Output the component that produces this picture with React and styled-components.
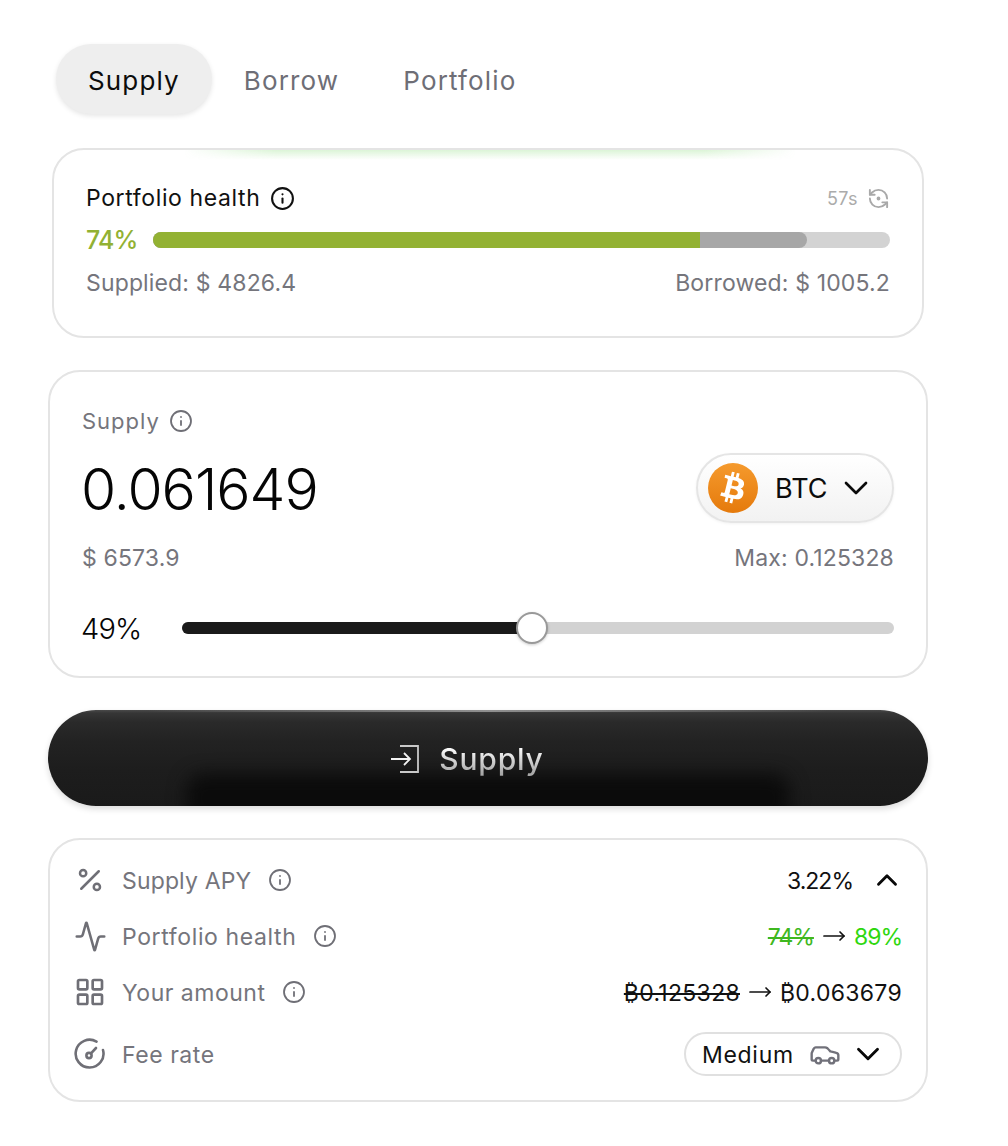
import React from "react";
import styled, { createGlobalStyle } from "styled-components";
import { Info, ChevronDown, ChevronUp, Percent, Activity, LayoutGrid, RefreshCcwDot, Car, MoveRight } from "lucide-react";

const Global = createGlobalStyle`
  html, body { margin: 0; padding: 0; background: #fff; }
  body { font-family: Inter, "Noto Sans", sans-serif; -webkit-font-smoothing: antialiased; }
  svg { flex-shrink: 0; }
`;

const Page = styled.div`
  width: 880px;
  margin-left: 48px;
  padding-top: 44px;
  height: 1102px;
  display: flex;
  flex-direction: column;
`;

const Tabs = styled.nav`
  display: flex;
  margin-left: 8px;
  height: 70px;
  align-items: center;
`;

const Tab = styled.div`
  box-sizing: border-box;
  height: 70px;
  display: flex;
  align-items: center;
  padding: 2px 32px 0;
  border-radius: 35px;
  font-size: 26px;
  letter-spacing: 1.15px;
  color: ${p => (p.$active ? "#0c0c0c" : "#6e6e76")};
  background: ${p => (p.$active ? "#eeeeee" : "transparent")};
  box-shadow: ${p => (p.$active ? "0 2px 5px rgba(0,0,0,.1)" : "none")};
`;

const Card = styled.section`
  position: relative;
  box-sizing: border-box;
  border: 2px solid #e4e4e4;
  border-radius: 32px;
  background: #fff;
  overflow: hidden;
`;

const HealthCard = styled(Card)`
  margin: 34px 4px 0;
  height: 190px;
  padding: 30px 32px 0 32px;
`;

const Glow = styled.div`
  position: absolute;
  top: -2px;
  left: 130px;
  width: 612px;
  height: 12px;
  background: linear-gradient(180deg, rgba(116, 214, 96, .3), rgba(116, 214, 96, 0));
  -webkit-mask-image: linear-gradient(90deg, transparent, #000 15%, #000 85%, transparent);
  mask-image: linear-gradient(90deg, transparent, #000 15%, #000 85%, transparent);
  &::before {
    content: "";
    position: absolute;
    top: 0;
    left: 0;
    right: 0;
    height: 2px;
    background: linear-gradient(90deg, rgba(116,214,96,0), #d6efcf 20%, #78d868 50%, #d6efcf 80%, rgba(116,214,96,0));
  }
`;

const Row = styled.div`
  display: flex;
  align-items: center;
  justify-content: space-between;
`;

const TitleGroup = styled.div`
  display: flex;
  align-items: center;
  gap: ${p => p.$gap || 10}px;
`;

const HealthTitle = styled.span`
  font-size: 23px;
  letter-spacing: 0.62px;
  color: #111;
  line-height: 36px;
`;

const Countdown = styled.div`
  display: flex;
  align-items: center;
  gap: 9px;
  color: #ababab;
  font-size: 18px;
  letter-spacing: .4px;
`;

const BarRow = styled.div`
  display: flex;
  align-items: center;
  gap: 16px;
  height: 34px;
  margin-top: 7px;
`;

const HealthPct = styled.span`
  width: 51px;
  font-size: 25px;
  font-weight: 500;
  color: #92b133;
  letter-spacing: -.9px;
`;

const Track = styled.div`
  position: relative;
  flex: 1;
  height: 16px;
  border-radius: 8px;
  background: #d3d3d3;
  overflow: hidden;
`;

const BorrowFill = styled.div`
  position: absolute;
  inset: 0 auto 0 0;
  border-radius: 0 8px 8px 0;
  background: #a7a7a7;
`;

const SupplyFill = styled.div`
  position: absolute;
  inset: 0 auto 0 0;
  background: #93b233;
`;

const MutedRow = styled(Row)`
  margin-top: ${p => p.$mt || 0}px;
  font-size: 23px;
  line-height: 34px;
  letter-spacing: .15px;
  color: #75757c;
`;

const SupplyCard = styled(Card)`
  margin-top: 32px;
  height: 308px;
  padding: 32px 32px 0 32px;
`;

const SupplyLabel = styled.span`
  font-size: 22px;
  letter-spacing: 1px;
  color: #75757c;
  line-height: 34px;
`;

const AmountRow = styled(Row)`
  margin-top: 15px;
  height: 70px;
`;

const Amount = styled.div`
  font-size: 57px;
  font-weight: 300;
  letter-spacing: -1px;
  color: #050505;
  padding-top: 3px;
  margin-left: -1px;
`;

const TokenChip = styled.div`
  box-sizing: border-box;
  width: 198px;
  height: 70px;
  display: flex;
  align-items: center;
  gap: 17px;
  padding: 0 16px 0 10px;
  border: 2px solid #e5e5e5;
  border-radius: 35px;
  background: linear-gradient(180deg, #fff, #f2f2f2);
  font-size: 27px;
  color: #0c0c0c;
  box-shadow: 0 1px 3px rgba(0,0,0,.05);
`;

const TokenChevron = styled.span`
  display: flex;
  margin-left: -8px;
  color: #0a0a0a;
`;

const SliderRow = styled.div`
  display: flex;
  align-items: center;
  height: 36px;
  margin-top: 35px;
`;

const SliderPct = styled.span`
  width: 100px;
  font-size: 29px;
  font-weight: 300;
  color: #050505;
  letter-spacing: -.8px;
  margin-left: -1px;
  padding-right: 1px;
`;

const SliderTrack = styled.div`
  position: relative;
  flex: 1;
  height: 12px;
  border-radius: 6px;
  background: #d2d2d2;
`;

const SliderFill = styled.div`
  height: 100%;
  border-radius: 6px 0 0 6px;
  background: #1a1a1a;
`;

const Thumb = styled.div`
  position: absolute;
  top: 50%;
  width: 32px;
  height: 32px;
  box-sizing: border-box;
  border: 2px solid #999;
  border-radius: 50%;
  background: #fff;
  transform: translate(-50%, -50%);
  box-shadow: 0 1px 3px rgba(0,0,0,.2);
`;

const SupplyButton = styled.button`
  position: relative;
  margin-top: 32px;
  height: 96px;
  width: 880px;
  border: none;
  padding: 2px 41px 0 0;
  border-radius: 48px;
  background: linear-gradient(180deg, #4a4a4a 0, #363636 3px, #2a2a2a 12px, #222 32px, #1d1d1d 60px, #1a1a1a 100%);
  box-shadow: 0 3px 6px rgba(0,0,0,.14);
  overflow: hidden;
  display: flex;
  align-items: center;
  justify-content: center;
  gap: 20px;
  font-family: inherit;
  &::before {
    content: "";
    position: absolute;
    left: 138px;
    right: 138px;
    top: 64px;
    height: 48px;
    border-radius: 18px;
    background: #0b0b0b;
    filter: blur(9px);
  }
  &::after {
    content: "";
    position: absolute;
    left: 100px;
    right: 100px;
    top: 0;
    height: 2px;
    background: linear-gradient(90deg, rgba(170,170,170,0), rgba(170,170,170,.75) 50%, rgba(170,170,170,0));
  }
`;

const ButtonIcon = styled.span`
  position: relative;
  z-index: 1;
  display: flex;
`;

const ButtonText = styled.span`
  position: relative;
  z-index: 1;
  font-size: 30px;
  font-weight: 500;
  letter-spacing: .8px;
  background: linear-gradient(180deg, #fafafa 25%, #a8a8a8 85%);
  -webkit-background-clip: text;
  background-clip: text;
  color: transparent;
  line-height: 40px;
`;

const DetailsCard = styled(Card)`
  margin-top: 32px;
  height: 264px;
  padding: 12px 24px 0 26px;
`;

const DetailRow = styled.div`
  display: flex;
  align-items: center;
  justify-content: space-between;
  height: ${p => p.$h || 56}px;
`;

const DetailLabel = styled.div`
  display: flex;
  align-items: center;
  font-size: 23px;
  letter-spacing: ${p => p.$spacing ?? 0.55}px;
  color: #75757c;
`;

const Lifted = styled.span`
  display: block;
  padding-top: 2px;
`;

const IconSlot = styled.span`
  display: flex;
  width: 30px;
  justify-content: center;
  margin-left: -1px;
  margin-right: 17px;
  color: #6f6f76;
`;

const LabelInfo = styled.span`
  display: flex;
  margin-left: 17px;
  color: #6f6f76;
`;

const DetailValue = styled.div`
  display: flex;
  align-items: center;
  font-size: 23px;
  letter-spacing: ${p => p.$spacing ?? 0.3}px;
  color: #111;
  gap: 8px;
`;

const Chevron = styled.span`
  display: flex;
  color: #0a0a0a;
  margin-left: 9px;
  margin-right: -2px;
`;

const Old = styled.s`
  color: ${p => p.$color || "inherit"};
`;

const Better = styled.span`
  color: #2fd70f;
`;

const FeeChip = styled.div`
  box-sizing: border-box;
  width: 218px;
  height: 44px;
  display: flex;
  align-items: center;
  padding: 0 14px 0 16px;
  border: 2px solid #e0e0e0;
  border-radius: 22px;
  font-size: 23px;
  letter-spacing: .7px;
  color: #111;
`;

const ChipIcon = styled.span`
  display: flex;
  color: #71717a;
  margin-left: 15px;
`;

const ChipChevron = styled.span`
  display: flex;
  color: #0a0a0a;
  margin-left: 8px;
`;

const BtcLogo = () => (
  <svg width="50" height="50" viewBox="0 0 64 64" aria-hidden="true">
    <defs>
      <linearGradient id="btc" x1="0" y1="0" x2="0" y2="1">
        <stop offset="0" stopColor="#f59a2d" />
        <stop offset="1" stopColor="#e57a0c" />
      </linearGradient>
    </defs>
    <circle cx="32" cy="32" r="32" fill="url(#btc)" />
    <path fill="#fff" d="M46.1 27.441c.638-4.265-2.61-6.559-7.052-8.088l1.44-5.78-3.517-.876-1.404 5.628c-.924-.23-1.873-.447-2.817-.662l1.415-5.665-3.516-.877-1.44 5.777c-.766-.175-1.518-.346-2.246-.527l.004-.018-4.85-1.211-.936 3.757s2.61.598 2.555.635c1.425.355 1.682 1.298 1.64 2.045l-1.642 6.578c.1.025.226.061.366.117l-.372-.092-2.3 9.217c-.175.434-.617 1.085-1.613.838.035.051-2.556-.638-2.556-.638l-1.746 4.026 4.577 1.14c.85.214 1.684.437 2.505.647l-1.455 5.842 3.514.877 1.44-5.783c.96.26 1.892.5 2.803.727l-1.435 5.753 3.518.876 1.456-5.832c5.998 1.135 10.508.677 12.406-4.748 1.53-4.367-.076-6.886-3.232-8.53 2.298-.53 4.03-2.042 4.491-5.164zm-8.037 11.27c-1.087 4.367-8.44 2.007-10.825 1.415l1.932-7.743c2.384.595 10.029 1.775 8.893 6.328zm1.088-11.333c-.992 3.973-7.112 1.955-9.098 1.46l1.751-7.022c1.986.495 8.38 1.418 7.347 5.562z" />
  </svg>
);

const FeeGauge = () => (
  <svg width="32" height="32" viewBox="0 0 32 32" fill="none" stroke="currentColor" strokeWidth="2.6" strokeLinecap="round" aria-hidden="true">
    <path d="M22.5 3.6A13.9 13.9 0 1 0 29 12" />
    <circle cx="15" cy="17.5" r="2.6" />
    <path d="M17 15.3l5-5.3" />
  </svg>
);

const EnterIcon = () => (
  <svg width="28" height="28" viewBox="0 0 28 28" fill="none" strokeWidth="1.8" aria-hidden="true">
    <defs>
      <linearGradient id="enter" x1="0" y1="0" x2="0" y2="1">
        <stop offset="0" stopColor="#f4f4f4" />
        <stop offset="1" stopColor="#a9a9a9" />
      </linearGradient>
    </defs>
    <path stroke="#c9c9c9" d="M9 1h18v26H9" />
    <path stroke="#f2f2f2" d="M0 14h19M13 8l6 6-6 6" />
  </svg>
);

const Arrow = () => <MoveRight size={24} strokeWidth={1.7} color="#111" />;

export default function App() {
  return (
    <>
      <Global />
      <Page>
        <Tabs>
          <Tab $active>Supply</Tab>
          <Tab>Borrow</Tab>
          <Tab>Portfolio</Tab>
        </Tabs>

        <HealthCard>
          <Glow />
          <Row>
            <TitleGroup>
              <HealthTitle>Portfolio health</HealthTitle>
              <Info size={25} strokeWidth={2} color="#111" />
            </TitleGroup>
            <Countdown>
              57s
              <RefreshCcwDot size={23} strokeWidth={2} color="#a9a9a9" />
            </Countdown>
          </Row>
          <BarRow>
            <HealthPct>74%</HealthPct>
            <Track>
              <BorrowFill style={{ width: "88.7%" }} />
              <SupplyFill style={{ width: "74.2%" }} />
            </Track>
          </BarRow>
          <MutedRow $mt={9}>
            <span>Supplied: $ 4826.4</span>
            <span>Borrowed: $ 1005.2</span>
          </MutedRow>
        </HealthCard>

        <SupplyCard>
          <TitleGroup $gap={9}>
            <SupplyLabel>Supply</SupplyLabel>
            <Info size={24} strokeWidth={1.8} color="#6f6f76" />
          </TitleGroup>
          <AmountRow>
            <Amount>0.061649</Amount>
            <TokenChip>
              <BtcLogo />
              <span>BTC</span>
              <TokenChevron><ChevronDown size={40} strokeWidth={1.6} /></TokenChevron>
            </TokenChip>
          </AmountRow>
          <MutedRow $mt={18}>
            <span>$ 6573.9</span>
            <span>Max: 0.125328</span>
          </MutedRow>
          <SliderRow>
            <SliderPct>49%</SliderPct>
            <SliderTrack>
              <SliderFill style={{ width: "49%" }} />
              <Thumb style={{ left: "49.15%" }} />
            </SliderTrack>
          </SliderRow>
        </SupplyCard>

        <SupplyButton type="button">
          <ButtonIcon>
            <EnterIcon />
          </ButtonIcon>
          <ButtonText>Supply</ButtonText>
        </SupplyButton>

        <DetailsCard>
          <DetailRow>
            <DetailLabel $spacing={0.15}>
              <IconSlot><Percent size={30} strokeWidth={2} /></IconSlot>
              <Lifted>Supply APY</Lifted>
              <LabelInfo><Info size={24} strokeWidth={1.8} /></LabelInfo>
            </DetailLabel>
            <DetailValue $spacing={-1}>
              <Lifted>3.22%</Lifted>
              <Chevron><ChevronUp size={34} strokeWidth={2} /></Chevron>
            </DetailValue>
          </DetailRow>
          <DetailRow>
            <DetailLabel $spacing={0.62}>
              <IconSlot><Activity size={33} strokeWidth={1.9} /></IconSlot>
              <Lifted>Portfolio health</Lifted>
              <LabelInfo><Info size={24} strokeWidth={1.8} /></LabelInfo>
            </DetailLabel>
            <DetailValue $spacing={-1}>
              <Lifted><Old $color="#3fb81f">74%</Old></Lifted>
              <Arrow />
              <Lifted><Better>89%</Better></Lifted>
            </DetailValue>
          </DetailRow>
          <DetailRow>
            <DetailLabel $spacing={0.5}>
              <IconSlot><LayoutGrid size={32} strokeWidth={2} /></IconSlot>
              <Lifted>Your amount</Lifted>
              <LabelInfo><Info size={24} strokeWidth={1.8} /></LabelInfo>
            </DetailLabel>
            <DetailValue>
              <Lifted><Old>₿0.125328</Old></Lifted>
              <Arrow />
              <Lifted>₿0.063679</Lifted>
            </DetailValue>
          </DetailRow>
          <DetailRow $h={68}>
            <DetailLabel>
              <IconSlot><FeeGauge /></IconSlot>
              <Lifted>Fee rate</Lifted>
            </DetailLabel>
            <FeeChip>
              <Lifted>Medium</Lifted>
              <ChipIcon><Car size={32} strokeWidth={1.8} /></ChipIcon>
              <ChipChevron><ChevronDown size={38} strokeWidth={1.8} /></ChipChevron>
            </FeeChip>
          </DetailRow>
        </DetailsCard>
      </Page>
    </>
  );
}
